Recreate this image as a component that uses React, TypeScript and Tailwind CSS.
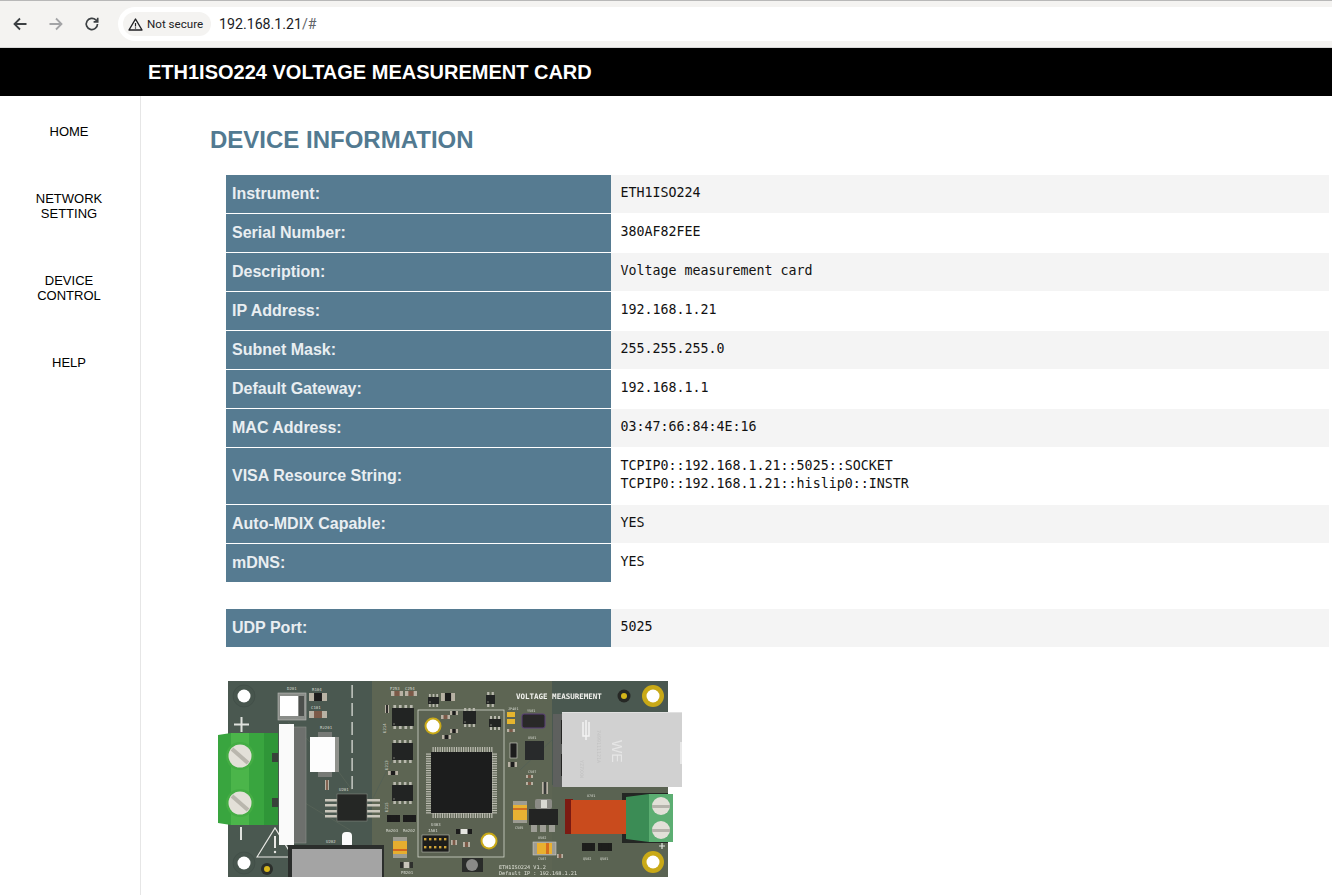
const rows: { label: string; value: string[]; shade: boolean }[] = [
  { label: 'Instrument:', value: ['ETH1ISO224'], shade: true },
  { label: 'Serial Number:', value: ['380AF82FEE'], shade: false },
  { label: 'Description:', value: ['Voltage measurement card'], shade: true },
  { label: 'IP Address:', value: ['192.168.1.21'], shade: false },
  { label: 'Subnet Mask:', value: ['255.255.255.0'], shade: true },
  { label: 'Default Gateway:', value: ['192.168.1.1'], shade: false },
  { label: 'MAC Address:', value: ['03:47:66:84:4E:16'], shade: true },
  { label: 'VISA Resource String:', value: ['TCPIP0::192.168.1.21::5025::SOCKET', 'TCPIP0::192.168.1.21::hislip0::INSTR'], shade: false },
  { label: 'Auto-MDIX Capable:', value: ['YES'], shade: true },
  { label: 'mDNS:', value: ['YES'], shade: false },
];

const navItems = [['HOME'], ['NETWORK', 'SETTING'], ['DEVICE', 'CONTROL'], ['HELP']];

function InfoRow({ label, value, shade }: { label: string; value: string[]; shade: boolean }) {
  return (
    <>
      <div className="flex items-center bg-[#567b91] px-[6px] font-['Liberation_Sans',sans-serif] text-base font-bold text-[#e9eef1]">
        {label}
      </div>
      <div
        className={`flex flex-col justify-center pt-[9px] pr-[9px] pb-[11px] pl-[9.5px] font-['DejaVu_Sans_Mono',monospace] text-[13.3px] leading-[18px] text-[#111] ${
          shade ? 'bg-[#f4f4f4]' : 'bg-white'
        }`}
      >
        {value.map((line) => (
          <div key={line}>{line}</div>
        ))}
      </div>
    </>
  );
}

// small SOIC style chip with pins above and below
function Chip({ x, y, w, h, pins = 4 }: { x: number; y: number; w: number; h: number; pins?: number }) {
  const step = w / pins;
  return (
    <g>
      {Array.from({ length: pins }).map((_, i) => (
        <g key={i} fill="#b9b9ae">
          <rect x={x + step * i + step * 0.25} y={y - 3} width={step * 0.5} height={h + 6} />
        </g>
      ))}
      <rect x={x} y={y} width={w} height={h} fill="#222423" />
      <circle cx={x + 2} cy={y + h - 2} r={0.7} fill="#9a9a8e" />
    </g>
  );
}

function Part({ x, y, w, h, body = '#1c1c1c', end = '#b8b2a4' }: { x: number; y: number; w: number; h: number; body?: string; end?: string }) {
  return (
    <g>
      <rect x={x} y={y} width={w} height={h} fill={end} />
      <rect x={x + w * 0.28} y={y} width={w * 0.44} height={h} fill={body} />
    </g>
  );
}

function GoldHole({ cx, cy }: { cx: number; cy: number }) {
  return (
    <g>
      <circle cx={cx} cy={cy} r={11} fill="#c9a917" />
      <circle cx={cx} cy={cy} r={6.5} fill="#fff" />
    </g>
  );
}

function Silk({ x, y, t, size = 4, rotate }: { x: number; y: number; t: string; size?: number; rotate?: number }) {
  return (
    <text
      x={x}
      y={y}
      fontSize={size}
      fontFamily="'DejaVu Sans Mono', monospace"
      fill="#d8dbd2"
      transform={rotate ? `rotate(${rotate} ${x} ${y})` : undefined}
    >
      {t}
    </text>
  );
}

function Board() {
  const mcuPins = Array.from({ length: 26 }).map((_, i) => i * 2.35 + 1.5);
  return (
    <svg width="475" height="210" viewBox="215 675 475 210" className="ml-[5px] block">
      <g style={{ filter: 'blur(0.5px)' }}>
        <rect x="228" y="681" width="440" height="196" fill="#4a5850" />
        <rect x="372" y="681" width="180" height="196" fill="#5d6553" />
        <rect x="552" y="785" width="116" height="92" fill="#5a6352" />
        <rect x="418" y="710" width="86" height="147" fill="#5b6252" stroke="#d3d6ca" strokeWidth="0.8" />
        <path d="M288 722 L330 760 L352 790 M300 800 L350 830 M392 760 L372 800 M520 770 L552 740" stroke="#556156" strokeWidth="1" fill="none" />

        {/* dashed isolation line */}
        {[685, 703, 722, 740, 758, 776].map((y) => (
          <rect key={y} x="351.5" y={y} width="1.2" height="13" fill="#e4e6e0" />
        ))}

        {/* mounting holes left */}
        <circle cx="244" cy="696" r="11" fill="#47554d" stroke="#414e47" strokeWidth="0.8" />
        <circle cx="244" cy="696" r="6.5" fill="#fff" />
        <circle cx="244" cy="863" r="11" fill="#47554d" stroke="#414e47" strokeWidth="0.8" />
        <circle cx="244" cy="863" r="6.5" fill="#fff" />
        <circle cx="267" cy="869" r="6" fill="#2c2f2b" />
        <circle cx="267" cy="869" r="3" fill="#d9b81c" />

        {/* plus and minus */}
        <path d="M234 724.500 H249 M241.500 717 V732" stroke="#dfe2dd" strokeWidth="2" />
        <path d="M241 827 V840" stroke="#dfe2dd" strokeWidth="2" />

        {/* warning triangle */}
        <path d="M257 857 L275 828 L293 857 Z" fill="none" stroke="#e8e8e4" strokeWidth="1.2" />
        <path d="M275 836 V848" stroke="#e8e8e4" strokeWidth="2" />
        <circle cx="275" cy="852" r="1.2" fill="#e8e8e4" />

        {/* green screw terminal */}
        <path d="M218 735 L231 733 H271 L278 734 V823 L271 825 H231 L218 823 Z" fill="#39a53f" />
        <rect x="231" y="733" width="18" height="92" fill="#4bb54a" />
        <rect x="264" y="733" width="14" height="92" fill="#2f9638" />
        <rect x="272" y="753" width="6" height="9" fill="#38423a" />
        <rect x="272" y="798" width="6" height="9" fill="#38423a" />
        {[756, 803].map((cy) => (
          <g key={cy}>
            <circle cx="240" cy={cy} r="14" fill="#44ad44" />
            <circle cx="240" cy={cy} r="11.5" fill="#e3e0d8" />
            <path d={`M232 ${cy - 7} L248 ${cy + 7}`} stroke="#b9b6ad" strokeWidth="4" />
          </g>
        ))}

        {/* long header next to terminal */}
        <rect x="293" y="727" width="13" height="116" fill="#6d706d" stroke="#8b8f89" strokeWidth="0.6" />
        <rect x="279" y="724" width="15" height="121" fill="#fafafa" />

        {/* top left parts */}
        <rect x="278" y="693" width="28" height="27" fill="#8a8d89" stroke="#bbbdb8" strokeWidth="0.6" />
        <rect x="280" y="696" width="18" height="20" fill="#fff" />
        <rect x="299" y="696" width="5" height="20" fill="#4c4f4c" />
        <Part x={309} y={693} w={18} h={8} />
        <Part x={309} y={711} w={18} h={7} body="#7c5a48" />
        <Silk x={287} y={690} t="D201" />
        <Silk x={312} y={691} t="R104" />
        <Silk x={311} y={709} t="C101" />

        {/* white transformer block */}
        <rect x="318" y="732" width="14" height="45" fill="#777a76" />
        <rect x="310" y="737" width="29" height="35" fill="#8f918c" />
        <rect x="310" y="737" width="25" height="35" fill="#fdfdfd" />
        <Silk x={320} y={729} t="Rz201" />

        {/* isolated amp */}
        <Part x={325} y={780} w={4} h={10} body="#7c5a48" />
        {[799, 804, 810, 815].map((y) => (
          <rect key={y} x="325" y={y} width="55" height="2.5" fill="#c9c6bb" />
        ))}
        <rect x="337" y="794" width="30" height="27" fill="#252725" stroke="#8e9088" strokeWidth="0.5" />
        <Silk x={339} y={791} t="U201" />

        {/* isolator block bottom */}
        <rect x="342" y="832" width="10" height="16" rx="4" fill="#fbfbfb" />
        <rect x="288" y="845" width="96" height="32" fill="#2b2e2c" />
        <rect x="292" y="849" width="90" height="28" fill="#a4a4a4" />
        <Silk x={326} y={843} t="U202" />

        {/* left chips in digital area */}
        <Chip x={392} y={708} w={22} h={18} />
        <Chip x={392} y={743} w={21} h={17} />
        <Chip x={392} y={785} w={21} h={16} />
        <Part x={385} y={705} w={4} h={8} />
        <Part x={388} y={771} w={10} h={4} />
        <Part x={391} y={691} w={12} h={5} body="#7c5a48" />
        <Part x={405} y={691} w={12} h={5} body="#7c5a48" />
        <Chip x={428} y={697} w={11} h={7} pins={3} />
        <Part x={441} y={693} w={14} h={8} />
        <Part x={387} y={815} w={13} h={7} body="#1c1c1c" end="#1c1c1c" />
        <Part x={403} y={815} w={13} h={7} body="#1c1c1c" end="#1c1c1c" />
        <Silk x={390} y={690} t="F253" />
        <Silk x={405} y={690} t="C254" />
        <Silk x={386} y={733} t="U214" rotate={-90} />
        <Silk x={388} y={770} t="U213" rotate={-90} />
        <Silk x={388} y={812} t="U215" rotate={-90} />
        <Silk x={386} y={832} t="Rm203" />
        <Silk x={403} y={832} t="Rm202" />
        <Silk x={401} y={874} t="PB201" />

        {/* tantalum cap */}
        <rect x="393" y="837" width="14" height="21" fill="#9c9c92" />
        <rect x="393" y="841" width="14" height="13" fill="#e6ae2f" />
        <rect x="393" y="849" width="14" height="2" fill="#d3661f" />
        <Part x={400} y={862} w={13} h={6} body="#c9c6bb" end="#2e302d" />

        {/* debug header */}
        <rect x="422" y="835" width="27" height="17" fill="#1c1d1b" stroke="#c9cdc2" strokeWidth="0.5" />
        {[425, 430, 435, 440, 445].flatMap((x) =>
          [839, 847].map((y) => <rect key={`${x}-${y}`} x={x - 1} y={y - 1} width="2.4" height="2.4" fill="#d0a437" />),
        )}
        <Silk x={428} y={832} t="JA01" />
        <Silk x={431} y={826} t="U403" />

        {/* main controller */}
        {mcuPins.map((p) => (
          <g key={p} fill="#bdbdb2">
            <rect x={431 + p} y="747" width="1.2" height="71" />
            <rect x="426" y={752 + p} width="71" height="1.2" />
          </g>
        ))}
        <rect x="431" y="752" width="61" height="61" fill="#1c1d1d" />
        <circle cx="433" cy="726" r="8.500" fill="#c9a917" />
        <circle cx="433" cy="726" r="6.500" fill="#fff" />
        <circle cx="489" cy="841" r="8.500" fill="#c9a917" />
        <circle cx="489" cy="841" r="6.500" fill="#fff" />

        {/* small parts round the controller */}
        <Chip x={463} y={711} w={13} h={13} pins={3} />
        <Chip x={489} y={719} w={12} h={8} pins={3} />
        <Chip x={486} y={695} w={9} h={9} pins={2} />
        <Part x={450} y={711} w={8} h={4} />
        <Part x={441} y={715} w={9} h={4} body="#7c5a48" />
        <Part x={450} y={729} w={8} h={4} />
        <Part x={442} y={735} w={9} h={4} />
        <Part x={456} y={829} w={16} h={5} body="#e5e5e0" end="#1c1c1c" />
        <Part x={451} y={840} w={6} h={5} body="#7c5a48" />
        <Part x={463} y={842} w={7} h={5} body="#7c5a48" />

        {/* reset button */}
        <rect x="462" y="858" width="21" height="14" fill="#2a2c2a" />
        <circle cx="472" cy="865" r="6" fill="#8a8a88" />

        {/* right of controller */}
        <rect x="507" y="712" width="8" height="5" fill="#e5b52e" />
        <rect x="507" y="719" width="8" height="5" fill="#e5b52e" />
        <rect x="522" y="714" width="23" height="14" rx="2" fill="#292828" stroke="#5b3f78" strokeWidth="1" />
        <rect x="525" y="741" width="19" height="19" fill="#282a2b" />
        <rect x="510" y="743" width="7" height="15" fill="#1d1d1d" stroke="#d6d6cc" strokeWidth="0.6" />
        <Part x={508} y={762} w={9} h={5} />
        <Part x={507} y={729} w={8} h={3} body="#7c5a48" />
        <Part x={526} y={775} w={7} h={3} body="#7c5a48" />
        <Part x={526} y={782} w={7} h={3} body="#7c5a48" />
        <Part x={542} y={782} w={6} h={12} body="#3a3c3a" />
        <Silk x={508} y={710} t="JP401" size={3.5} />
        <Silk x={527} y={712} t="Y501" size={3.5} />
        <Silk x={528} y={739} t="U501" size={3.5} />
        <Silk x={528} y={773} t="C507" size={3.5} />

        {/* left tantalum and regulator */}
        <rect x="513" y="801" width="14" height="22" fill="#9d9c92" />
        <rect x="513" y="805" width="14" height="15" fill="#e8b233" />
        <rect x="513" y="808" width="14" height="2" fill="#cf6f24" />
        <rect x="535" y="799" width="17" height="10" rx="2" fill="#8c8c86" />
        <rect x="541" y="800" width="6" height="8" fill="#d9d9d2" />
        {[531, 540, 549].map((x) => (
          <rect key={x} x={x} y="824" width="6" height="8" fill="#9e9e96" />
        ))}
        <rect x="529" y="809" width="29" height="16" fill="#232423" />
        <Silk x={515} y={829} t="C505" size={3.5} />
        <Silk x={538} y={839} t="U502" size={3.5} />

        {/* lower tantalum */}
        <rect x="533" y="842" width="23" height="13" fill="#9e9c92" stroke="#d7d7cf" strokeWidth="0.5" />
        <rect x="537" y="843" width="15" height="11" fill="#e9b02f" />
        <rect x="546" y="843" width="3" height="11" fill="#d66d1e" />
        <Silk x={538} y={860} t="C507" size={3.5} />
        <Part x={557} y={854} w={6} h={4} body="#7c5a48" />

        <Part x={582} y={843} w={13} h={8} body="#1d1e1c" end="#1d1e1c" />
        <Part x={598} y={843} w={14} h={8} body="#1d1e1c" end="#1d1e1c" />
        <Silk x={583} y={860} t="Q502" size={3.5} />
        <Silk x={600} y={860} t="Q501" size={3.5} />

        {/* RJ45 jack */}
        <rect x="553" y="714" width="10" height="73" fill="#5e605e" />
        <rect x="561" y="720" width="3" height="24" fill="#232322" />
        <rect x="561" y="754" width="3" height="22" fill="#232322" />
        <rect x="562" y="712" width="120" height="75" fill="#d1d1d1" />
        <rect x="562" y="712" width="120" height="1" fill="#e0e0e0" />
        <rect x="680" y="742" width="2" height="22" fill="#e8e8e8" />
        <text x="0" y="0" fontSize="14" fontFamily="'Liberation Sans', sans-serif" fill="#e6e6e6" transform="translate(612 740) rotate(90)">WE</text>
        <text x="0" y="0" fontSize="5" fontFamily="'DejaVu Sans Mono', monospace" fill="#c2c2c2" transform="translate(597 730) rotate(90)">7499111121A</text>
        <text x="0" y="0" fontSize="5" fontFamily="'DejaVu Sans Mono', monospace" fill="#c2c2c2" transform="translate(580 760) rotate(90)">YZ7XXW</text>
        <path d="M583 722 V736 H589 V722 M586 720 V740" fill="none" stroke="#f2f2f2" strokeWidth="1.500" />

        {/* relay and right terminal */}
        <rect x="622" y="793" width="46" height="50" fill="#242724" />
        <rect x="565" y="799" width="8" height="35" fill="#7c1a12" />
        <rect x="571" y="800" width="55" height="34" fill="#c94b1d" />
        <path d="M626 797 L649 794 V842 L626 839 Z" fill="#3b8c55" />
        <rect x="649" y="794" width="24" height="48" fill="#5cae72" />
        {[806, 830].map((cy) => (
          <g key={cy}>
            <circle cx="661" cy={cy} r="9" fill="#e2e0d8" />
            <rect x="652" y={cy - 1} width="18" height="3" fill="#b5b3ab" />
          </g>
        ))}
        <path d="M659 846 H665 M662 843 V849" stroke="#e3e5df" strokeWidth="1.200" />
        <Silk x={587} y={797} t="U701" size={3.500} />

        {/* gold mounting holes right */}
        <circle cx="624" cy="696" r="6.500" fill="#262825" />
        <circle cx="624" cy="696" r="3" fill="#d4b51a" />
        <GoldHole cx={653} cy={696} />
        <GoldHole cx={653} cy={862} />

        <text x="516" y="699" fontSize="7.500" fontWeight="700" fontFamily="'DejaVu Sans Mono', monospace" fill="#f2f2ee">VOLTAGE MEASUREMENT</text>
        <text x="499" y="869" fontSize="5.200" fontFamily="'DejaVu Sans Mono', monospace" fill="#e2e4da">ETH1ISO224 V1.2</text>
        <text x="499" y="875" fontSize="5.200" fontFamily="'DejaVu Sans Mono', monospace" fill="#e2e4da">Default IP : 192.168.1.21</text>
      </g>
    </svg>
  );
}

export default function App() {
  return (
    <div className="flex h-screen flex-col overflow-hidden bg-white font-['Liberation_Sans',sans-serif]">
      {/* Browser toolbar */}
      <div className="flex h-12 shrink-0 items-center border-t border-b border-t-[#b8b8b8] border-b-[#d8d8d8] bg-[#f4f3f1]">
        <div className="flex w-[118px] items-center pl-3">
          <svg width="16" height="16" viewBox="0 0 16 16" className="text-[#3c4043]">
            <path d="M14.500 8H2.500M8 2.500 2.500 8 8 13.500" fill="none" stroke="currentColor" strokeWidth="1.800" />
          </svg>
          <svg width="16" height="16" viewBox="0 0 16 16" className="ml-5 text-[#a3a4a6]">
            <path d="M1.500 8h12M8 2.500 13.500 8 8 13.500" fill="none" stroke="currentColor" strokeWidth="1.800" />
          </svg>
          <svg width="16" height="16" viewBox="0 0 16 16" className="ml-5 text-[#3c4043]">
            <path d="M13.500 8A5.600 5.600 0 1 1 11.800 3.900L13.500 5.600M13.700 1.700V5.800H9.600" fill="none" stroke="currentColor" strokeWidth="1.700" />
          </svg>
        </div>
        <div className="flex h-[34px] flex-1 items-center rounded-l-full bg-white pl-[5px]">
          <div className="flex h-6 w-[88px] items-center gap-[4px] rounded-full bg-[#f4f3f1] pl-[5px] font-['Roboto',sans-serif] text-[11.6px] text-[#202124]">
            <svg width="15" height="15" viewBox="0 0 15 15">
              <path d="M7.500 2 14 13H1Z" fill="none" stroke="#202124" strokeWidth="1.400" strokeLinejoin="round" />
              <path d="M7.500 6v3.500" stroke="#202124" strokeWidth="1.200" />
              <circle cx="7.500" cy="11" r="0.700" fill="#202124" />
            </svg>
            <span className="pt-px">Not secure</span>
          </div>
          <span className="ml-2 pt-px font-['Roboto',sans-serif] text-[14.2px] text-[#202124]">
            192.168.1.21<span className="text-[#5f6368]">/#</span>
          </span>
        </div>
      </div>

      {/* Page header */}
      <div className="flex h-12 shrink-0 items-center bg-black pl-[148px] text-xl font-bold text-white">
        ETH1ISO224 VOLTAGE MEASUREMENT CARD
      </div>

      <div className="flex min-h-0 flex-1">
        <nav className="flex w-[141px] shrink-0 flex-col items-center gap-[52px] border-r border-[#e6e6e6] pt-[28px] pr-[2px] text-[13px] leading-[15px] text-black">
          {navItems.map((lines) => (
            <div key={lines[0]} className="text-center">
              {lines.map((l) => (
                <div key={l}>{l}</div>
              ))}
            </div>
          ))}
        </nav>

        <main className="min-w-0 flex-1 pl-[69px]">
          <h1 className="mt-[30px] text-2xl leading-[28px] font-bold text-[#527a91]">DEVICE INFORMATION</h1>
          <div className="mt-[21px] ml-4 mr-[3px] grid grid-cols-[385px_1fr] gap-x-0 gap-y-px">
            {rows.map((r) => (
              <InfoRow key={r.label} {...r} />
            ))}
          </div>
          <div className="mt-[27px] ml-4 mr-[3px] grid grid-cols-[385px_1fr]">
            <InfoRow label="UDP Port:" value={['5025']} shade />
          </div>
          <div className="mt-[28px]">
            <Board />
          </div>
        </main>
      </div>
    </div>
  );
}
